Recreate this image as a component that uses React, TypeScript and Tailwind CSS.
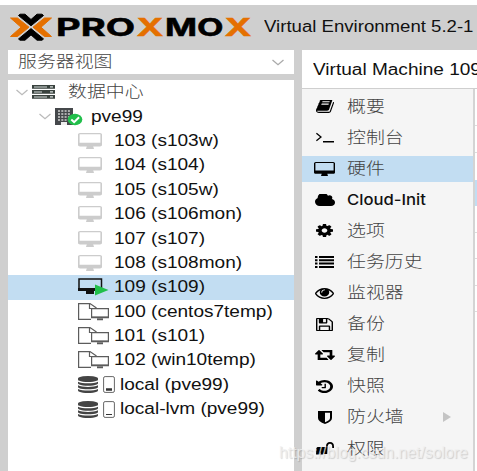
import React from "react";

type IconProps = { name: string; className: string };

const paths: Record<string, { box: string; d: string }> = {
  desktop: { box: "0 0 1920 1664", d: "M1792 992v-832q0-13-9.5-22.5t-22.5-9.5h-1600q-13 0-22.5 9.5t-9.5 22.5v832q0 13 9.5 22.5t22.5 9.5h1600q13 0 22.5-9.5t9.5-22.5zM1920 160v1088q0 66-47 113t-113 47h-544q0 37 16 77.5t32 71 16 43.5q0 26-19 45t-45 19h-512q-26 0-45-19t-19-45q0-14 16-44t32-70 16-78h-544q-66 0-113-47t-47-113v-1088q0-66 47-113t113-47h1600q66 0 113 47t47 113z" },
  cog: { box: "128 128 1536 1536", d: "M1152 896q0-106-75-181t-181-75-181 75-75 181 75 181 181 75 181-75 75-181zm512-109v222q0 12-8 23t-20 13l-185 28q-19 54-39 91 35 50 107 138 10 12 10 25t-9 23q-27 37-99 108t-94 71q-12 0-26-9l-138-108q-44 23-91 38-16 136-29 186-7 28-36 28h-222q-14 0-24.5-8.5t-11.5-21.5l-28-184q-49-16-90-37l-141 107q-10 9-25 9-14 0-25-11-126-114-165-168-7-10-7-23 0-12 8-23 15-21 51-66.5t54-70.5q-27-50-41-99l-183-27q-13-2-21-12.5t-8-23.5v-222q0-12 8-23t19-13l186-28q14-46 39-92-40-57-107-138-10-12-10-24 0-10 9-23 26-36 98.5-107.5t94.5-71.5q13 0 26 10l138 107q44-23 91-38 16-136 29-186 7-28 36-28h222q14 0 24.5 8.5t11.5 21.5l28 184q49 16 90 37l142-107q9-9 24-9 13 0 25 10 129 119 165 170 7 8 7 22 0 12-8 23-15 21-51 66.5t-54 70.5q26 50 41 98l183 28q13 2 21 12.5t8 23.5z" },
  cloud: { box: "64 256 1920 1280", d: "M1984 1152q0 159-112.5 271.5t-271.5 112.5h-1088q-185 0-316.5-131.5t-131.5-316.5q0-132 71-241.5t187-163.5q-2-28-2-43 0-212 150-362t362-150q158 0 286.5 88t187.5 230q70-62 166-62 106 0 181 75t75 181q0 75-41 138 129 30 213 134.5t84 239.5z" },
  book: { box: "64 256 1664 1408", d: "M1703 478q40 57 18 129l-275 906q-19 64-76.5 107.5t-122.5 43.5h-923q-77 0-148.5-53.5t-99.5-131.5q-24-67-2-127 0-4 3-27t4-37q1-8-3-21.5t-3-19.5q2-11 8-21t16.5-23.5 16.5-23.5q23-38 45-91.5t30-91.5q3-10 .5-30t-.5-28q3-11 17-28t17-23q21-36 42-92t25-90q1-9-2.5-32t.5-28q4-13 22-30.5t22-22.5q19-26 42.5-84.5t27.5-96.5q1-8-3-25.5t-2-26.5q2-8 9-18t18-23 17-21q8-12 16.5-30.5t15-35 16-36 19.5-32 26.5-23.5 36-11.5 47.5 5.5l-1 3q38-9 51-9h761q74 0 114 56t18 130l-274 906q-36 119-71.5 153.5t-128.5 34.5h-869q-27 0-38 15-11 16-1 43 24 70 144 70h923q29 0 56-15.5t35-41.5l300-987q7-22 5-57 38 15 59 43zm-1064 2q-4 13 2 22.5t20 9.5h608q13 0 25.5-9.5t16.5-22.5l21-64q4-13-2-22.5t-20-9.5h-608q-13 0-25.5 9.5t-16.5 22.5zm-83 256q-4 13 2 22.5t20 9.5h608q13 0 25.5-9.5t16.5-22.5l21-64q4-13-2-22.5t-20-9.5h-608q-13 0-25.5 9.5t-16.5 22.5z" },
  eye: { box: "0 384 1792 1152", d: "M1664 960q-152-236-381-353 61 104 61 225 0 185-131.5 316.5t-316.5 131.5-316.5-131.5-131.5-316.5q0-121 61-225-229 117-381 353 133 205 333.5 326.5t434.5 121.5 434.5-121.5 333.5-326.5zm-720-384q0-20-14-34t-34-14q-125 0-214.5 89.5t-89.5 214.5q0 20 14 34t34 14 34-14 14-34q0-86 61-147t147-61q20 0 34-14t14-34zm848 384q0 34-20 69-140 230-376.5 368.5t-499.5 138.5-499.5-139-376.5-368q-20-35-20-69t20-69q140-229 376.5-368t499.5-139 499.5 139 376.5 368q20 35 20 69z" },
  save: { box: "128 128 1536 1536", d: "M512 1536h768v-384h-768v384zm896 0h128v-896q0-14-10-38.5t-20-34.5l-281-281q-10-10-34-20t-39-10v416q0 40-28 68t-68 28h-576q-40 0-68-28t-28-68v-416h-128v1280h128v-416q0-40 28-68t68-28h832q40 0 68 28t28 68v416zm-384-928v-320q0-13-9.5-22.5t-22.5-9.5h-192q-13 0-22.5 9.5t-9.5 22.5v320q0 13 9.5 22.5t22.5 9.5h192q13 0 22.5-9.5t9.5-22.5zm640 32v928q0 40-28 68t-68 28h-1344q-40 0-68-28t-28-68v-1344q0-40 28-68t68-28h928q40 0 88 20t76 48l280 280q28 28 48 76t20 88z" },
  retweet: { box: "0 384 1920 1152", d: "M1280 1504q0 13-9.5 22.5t-22.5 9.5h-960q-8 0-13.5-2t-9-7-5.5-8-3-11.5-1-11.5v-600h-192q-26 0-45-19t-19-45q0-24 15-41l320-384q19-22 49-22t49 22l320 384q15 17 15 41 0 26-19 45t-45 19h-192v384h576q16 0 25 11l160 192q7 10 7 21zm640-416q0 24-15 41l-320 384q-20 23-49 23t-49-23l-320-384q-15-17-15-41 0-26 19-45t45-19h192v-384h-576q-16 0-25-12l-160-192q-7-9-7-20 0-13 9.5-22.5t22.5-9.5h960q8 0 13.5 2t9 7 5.5 8 3 11.5 1 11.5v600h192q26 0 45 19t19 45z" },
  history: { box: "128 128 1536 1536", d: "M1664 896q0 156-61 298t-164 245-245 164-298 61q-172 0-327-72.5t-264-204.5q-7-10-6.5-22.5t8.5-20.5l137-138q10-9 25-9 16 2 23 12 73 95 179 147t225 52q104 0 198.5-40.5t163.5-109.5 109.5-163.5 40.5-198.5-40.5-198.5-109.5-163.5-163.5-109.5-198.5-40.5q-98 0-188 35.5t-160 101.5l137 138q31 30 14 69-17 40-59 40h-448q-26 0-45-19t-19-45v-448q0-42 40-59 39-17 69 14l130 129q107-101 244.5-156.5t284.5-55.5q156 0 298 61t245 164 164 245 61 298zm-640-288v448q0 14-9 23t-23 9h-320q-14 0-23-9t-9-23v-64q0-14 9-23t23-9h224v-352q0-14 9-23t23-9h64q14 0 23 9t9 23z" },
  database: { box: "128 0 1536 1792", d: "M896 768q237 0 443-43t325-127v170q0 69-103 128t-280 93.5-385 34.5-385-34.5-280-93.5-103-128v-170q119 84 325 127t443 43zm0 768q237 0 443-43t325-127v170q0 69-103 128t-280 93.5-385 34.5-385-34.5-280-93.5-103-128v-170q119 84 325 127t443 43zm0-384q237 0 443-43t325-127v170q0 69-103 128t-280 93.5-385 34.5-385-34.5-280-93.5-103-128v-170q119 84 325 127t443 43zm0-1152q208 0 385 34.5t280 93.5 103 128v128q0 69-103 128t-280 93.5-385 34.5-385-34.5-280-93.5-103-128v-128q0-69 103-128t280-93.5 385-34.5z" },
  list: { box: "0 0 19 12", d: "M0 0h2.5v2H0zM4 0h15v2H4zM0 3.3h2.5v2H0zM4 3.3h15v2H4zM0 6.6h2.5v2H0zM4 6.6h15v2H4zM0 9.9h2.5v2H0zM4 9.9h15v2H4z" },
  terminal: { box: "0 0 18 11", d: "M.8.8 0 1.8 4 5 0 8.2l.8 1L6 5zM7 9h11v1.5H7z" },
  shield: { box: "0 0 14 14", d: "M0 0h14v7.5q0 4-7 6.5Q0 11.500 0 7.500zM7 1.800v10.200q5-2 5-4.500V1.800z" },
  unlock: { box: "0 0 18 13", d: "M1.500 5H10V4.500Q10 0 14 0t4 4.500V6h-1.800V4.500Q16.200 1.800 14 1.800T11.800 4.500V5.500l-.5 6.500H7.800l.4-2-1 2.500H4.500l.5-2.500-1.500 2.500H0L.4 6z" },
};

function Icon({ name, className }: IconProps) {
  const p = paths[name];
  return (
    <svg viewBox={p.box} preserveAspectRatio="none" className={`shrink-0 ${className}`} fill="currentColor" fillRule={name === "shield" ? "evenodd" : "nonzero"}>
      <path d={p.d} />
    </svg>
  );
}

const chevron = (cls: string) => (
  <svg viewBox="0 0 12 7" className={`h-[7px] w-3 shrink-0 ${cls}`} fill="none" stroke="currentColor" strokeWidth="1.3">
    <path d="M.5 1 6 5.700 11.500 1" />
  </svg>
);

const templateIcon = (
  <svg viewBox="0 0 31 18" className="h-[18px] w-[31px] shrink-0" fill="none" stroke="#5c5c5c" strokeWidth="1.2">
    <path d="M13 16.400H.6V.6H12L18.500 5M11.500.6V5.500H14" />
    <path d="M13.600 5.600h16.800v8.800H13.600z" fill="#fff" />
    <path d="M13 14.300h18M19 16.300h6" strokeWidth="1.700" />
  </svg>
);

function Storage({ full }: { full?: boolean }) {
  return (
    <>
      <Icon name="database" className="h-[17px] w-5 text-[#444]" />
      <svg viewBox="0 0 12 17" className="ml-[5px] h-[17px] w-3" fill="none" stroke="#666">
        <rect x=".6" y=".6" width="10.800" height="15.800" rx="1.500" />
        <path d="M3 13.500h6" strokeWidth={full ? 2.5 : 1} stroke="#333" />
      </svg>
    </>
  );
}

const vms = ["103 (s103w)", "104 (s104)", "105 (s105w)", "106 (s106mon)", "107 (s107)", "108 (s108mon)"];
const templates = ["100 (centos7temp)", "101 (s101)", "102 (win10temp)"];

const menu = [
  { label: "概要", icon: "book", size: "h-[13px] w-[18px]" },
  { label: "控制台", icon: "terminal", size: "h-[11px] w-[18px]" },
  { label: "硬件", icon: "desktop", size: "h-[14px] w-[21px]", on: true },
  { label: "Cloud-Init", icon: "cloud", size: "h-[12px] w-5" },
  { label: "选项", icon: "cog", size: "h-[13px] w-[17px]" },
  { label: "任务历史", icon: "list", size: "h-3 w-[19px]" },
  { label: "监视器", icon: "eye", size: "h-[11px] w-[19px]" },
  { label: "备份", icon: "save", size: "h-[13px] w-[17px]" },
  { label: "复制", icon: "retweet", size: "h-[10px] w-5" },
  { label: "快照", icon: "history", size: "h-[13px] w-[17px]" },
  { label: "防火墙", icon: "shield", size: "h-[13px] w-[14px]", more: true },
  { label: "权限", icon: "unlock", size: "h-[13px] w-[18px]" },
];

const rowCls = "flex h-[24.4px] items-center";
const textCls = "inline-block origin-left scale-x-[1.19] whitespace-nowrap text-[16px] leading-5 text-[#111]";
const cjkCls = "inline-block origin-left scale-x-[1.18] whitespace-nowrap text-[16px] leading-5 font-light text-[#444]";

export default function App() {
  return (
    <div className="relative flex h-[471px] w-[477px] flex-col overflow-hidden border-t-[5px] border-white bg-[#cfcfcf] font-['Liberation_Sans','Noto_Sans_CJK_SC',sans-serif]">
      <header className="flex h-[45px] shrink-0 items-start">
        <svg viewBox="0 0 250 40" className="ml-[5px] h-10 w-[250px] shrink-0" fontFamily="Inter, sans-serif" fontWeight="700" fontSize="24">
          <g fill="#e57000" stroke="#e57000" strokeLinejoin="round" strokeWidth="1">
            <path d="M5.500 13h7l11.500 9.200-11.500 9.300h-7L16 22.200z" />
            <path d="M46.500 13h-7L28 22.200l11.500 9.300h7L36 22.200z" />
          </g>
          <g fill="#000" stroke="#000" strokeLinejoin="round" strokeWidth="1">
            <path d="M13.500 10.500 15 9.200h5l6 5.300 6-5.300h5l1.500 1.300L26 20.800z" />
            <path d="M13.500 33.900 15 35.200h5l6-5.300 6 5.300h5l1.500-1.300L26 23.600z" />
          </g>
          <text x="51" y="31" textLength="79" lengthAdjust="spacingAndGlyphs" stroke="#000" strokeWidth=".5">PRO</text>
          <text x="131.500" y="31" textLength="27" lengthAdjust="spacingAndGlyphs" fill="#e57000" stroke="#e57000" strokeWidth=".5">X</text>
          <text x="160" y="31" textLength="58.500" lengthAdjust="spacingAndGlyphs" stroke="#000" strokeWidth=".5">MO</text>
          <text x="219.500" y="31" textLength="27" lengthAdjust="spacingAndGlyphs" fill="#e57000" stroke="#e57000" strokeWidth=".5">X</text>
        </svg>
        <span className="mt-3 ml-[9px] inline-block origin-left scale-x-[1.162] text-[16px] leading-5 whitespace-nowrap text-[#111]">Virtual Environment 5.2-1</span>
      </header>

      <div className="flex min-h-0 flex-1 gap-2 pl-2">
        <aside className="flex w-[286px] shrink-0 flex-col gap-1.5">
          <div className="flex h-6 shrink-0 items-center justify-between bg-white pr-2.5 pl-2.5">
            <span className={cjkCls}>服务器视图</span>
            {chevron("text-[#aaa]")}
          </div>
          <div className="flex-1 bg-white">
            <div className={`${rowCls} pl-2`}>
              {chevron("text-[#bbb]")}
              <svg viewBox="0 0 23 14" className="ml-1 h-[14px] w-[23px]" fill="#39423e">
                <path d="M0 0h23v3.800H0zM0 5h23v3.800H0zM0 10h23v3.800H0z" />
                <path d="M2 1.500h13v1H2zM18 1.300h3v1.200h-3zM2 6.500h8v1H2zM18 6.300h3v1.200h-3zM2 11.500h13v1H2zM18 11.300h3v1.200h-3z" fill="#d8dedb" />
              </svg>
              <span className={`${cjkCls} ml-[13px]`}>数据中心</span>
            </div>
            <div className={`${rowCls} pl-[31px]`}>
              {chevron("text-[#bbb]")}
              <svg viewBox="0 0 28 18" className="ml-1 h-[18px] w-7">
                <path d="M0 0h18v17H0z" fill="#45484b" />
                <path d="M3 3h12M3 6h12M3 9h12M3 12h12" stroke="#d0d0d0" strokeWidth="1.500" strokeDasharray="2 1.300" />
                <path d="M6 14h6v3H6z" fill="#eee" />
                <ellipse cx="20" cy="11.500" rx="7.300" ry="5.800" fill="#21bf4b" />
                <path d="m16.300 11.600 2.800 2.500 5-4.800" fill="none" stroke="#fff" strokeWidth="2" />
              </svg>
              <span className={`${textCls} ml-2`}>pve99</span>
            </div>
            {vms.map((v) => (
              <div key={v} className={`${rowCls} pl-[70px]`}>
                <Icon name="desktop" className="h-4 w-[24px] text-[#ccc]" />
                <span className={`${textCls} ml-3`}>{v}</span>
              </div>
            ))}
            <div className={`${rowCls} bg-[#c2ddf2] pl-[70px]`}>
              <svg viewBox="0 0 31 18" className="h-[18px] w-[31px]">
                <path d="M1 1h22.500v10.500H1z" fill="none" stroke="#111" strokeWidth="1.500" />
                <path d="M0 10h24v3H16v3H8v-3H0z" fill="#111" />
                <path d="M17 6.500 30.500 12 17 17.500z" fill="#21bf4b" />
              </svg>
              <span className={`${textCls} ml-[5px]`}>109 (s109)</span>
            </div>
            {templates.map((v) => (
              <div key={v} className={`${rowCls} pl-[70px]`}>
                {templateIcon}
                <span className={`${textCls} ml-[5px]`}>{v}</span>
              </div>
            ))}
            <div className={`${rowCls} pl-[70px]`}>
              <Storage full />
              <span className={`${textCls} ml-[5px]`}>local (pve99)</span>
            </div>
            <div className={`${rowCls} pl-[70px]`}>
              <Storage />
              <span className={`${textCls} ml-[5px]`}>local-lvm (pve99)</span>
            </div>
          </div>
        </aside>

        <main className="flex min-w-0 flex-1 flex-col bg-white">
          <div className="flex h-[39px] shrink-0 items-center border-b border-[#cfcfcf] pt-px pl-[11px]">
            <span className={textCls}>Virtual Machine 109</span>
          </div>
          <div className="flex flex-1">
            <nav className="flex w-[173px] shrink-0 flex-col gap-[5.100px] border-r-2 border-[#d4d4d4] bg-[#f5f5f5] pt-[4.500px]">
              {menu.map((m) => (
                <div key={m.label} className={`flex h-[26px] shrink-0 items-center ${m.on ? "bg-[#c2ddf2]" : ""}`}>
                  <span className="flex w-[45px] shrink-0 justify-center">
                    <Icon name={m.icon} className={m.size} />
                  </span>
                  {m.label === "Cloud-Init" ? (
                    <span className="inline-block origin-left scale-x-[1.11] text-[15px] font-medium text-[#111] font-['Inter',sans-serif]">{m.label}</span>
                  ) : (
                    <span className={cjkCls}>{m.label}</span>
                  )}
                  {m.more && (
                    <svg viewBox="0 0 8 10" className="mr-[22px] ml-auto h-[10px] w-2" fill="#c4c4c4">
                      <path d="M0 0 8 5 0 10z" />
                    </svg>
                  )}
                </div>
              ))}
            </nav>
            <div className="flex flex-1 flex-col">
              <div className="h-[37px] border-b border-[#ddd]" />
              <div className="h-[27px] border-b border-[#ddd]" />
              <div className="h-[27px]" />
              <div className="h-[26px] bg-[#c2ddf2]" />
              <div className="h-[27px] border-b border-[#ddd]" />
              <div className="h-[26px] border-b border-[#ddd]" />
              <div className="h-[27px] border-b border-[#ddd]" />
              <div className="h-[26px] border-b border-[#ddd]" />
            </div>
          </div>
        </main>
      </div>
      <span className="absolute top-[438px] left-[279px] text-[15.8px] leading-5 whitespace-nowrap text-[#f0f0f0]/80 [text-shadow:1px_1px_1px_rgba(0,0,0,0.16)]">https://blog.csdn.net/solore</span>
    </div>
  );
}
